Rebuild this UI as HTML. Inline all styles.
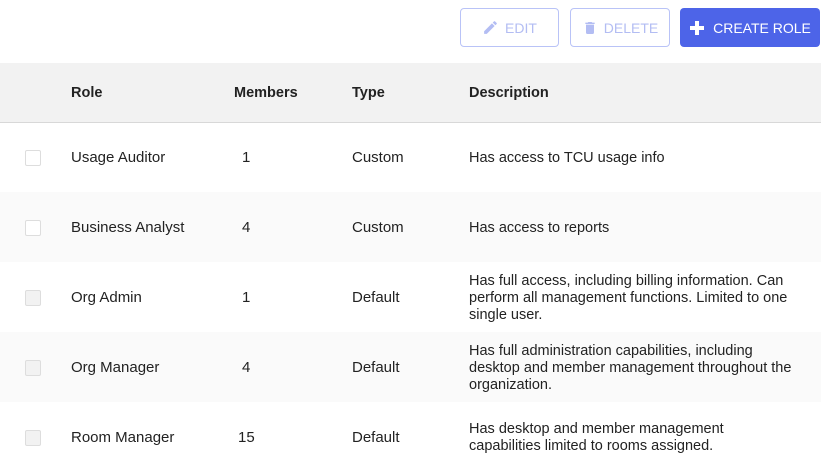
<!DOCTYPE html>
<html><head><style>
body{margin:0;width:821px;height:470px;overflow:hidden;background:#fff;font-family:"Liberation Sans",sans-serif;color:#222;font-size:15px}
.btn{position:absolute;top:8px;height:39px;border-radius:4px;box-sizing:border-box;display:flex;align-items:center;justify-content:center;font-size:14px;letter-spacing:0}
.out{border:1px solid #b9c3f7;color:#b3bdf3;background:#fff}
.fill{background:#4d64e8;color:#fff}
.hdr{position:absolute;left:0;top:63px;width:821px;height:59px;background:#f2f2f2;border-bottom:1px solid #d8d8d8}
.hdr span{position:absolute;top:22px;font-weight:bold;font-size:14.5px}
.row{position:absolute;left:0;width:821px;height:70px}
.row span{position:absolute}
.cb{position:absolute;left:25px;width:14px;height:14px;border:1px solid #ddd;border-radius:2px;top:28px;background:#fff}
.cell{top:27px}
.desc{left:469px;top:1px;height:70px;display:flex;align-items:center;line-height:17px;width:352px;font-size:14.5px}
</style></head><body>
<div class="btn out" style="left:460px;width:99px"><svg width="17" height="17" viewBox="0 0 24 24" style="margin-right:6px"><path fill="#b3bdf3" d="M3 17.25V21h3.75L17.81 9.94l-3.75-3.75L3 17.25zM20.71 7.04a1 1 0 000-1.41l-2.34-2.34a1 1 0 00-1.41 0l-1.83 1.83 3.75 3.75 1.83-1.83z"/></svg>EDIT</div>
<div class="btn out" style="left:570px;width:100px"><svg width="16" height="18" viewBox="0 0 24 24" style="margin-right:6px"><path fill="#b3bdf3" d="M6 19c0 1.1.9 2 2 2h8c1.1 0 2-.9 2-2V7H6v12zM19 4h-3.5l-1-1h-5l-1 1H5v2h14V4z"/></svg>DELETE</div>
<div class="btn fill" style="left:680px;width:140px"><svg width="16" height="16" viewBox="0 0 16 16" style="margin-right:8px"><path fill="#fff" d="M6 1h4v5h5v4h-5v5H6v-5H1V6h5z"/></svg>CREATE ROLE</div>
<div class="hdr"><span style="left:71px">Role</span><span style="left:234px">Members</span><span style="left:352px">Type</span><span style="left:469px">Description</span></div>
<div class="row" style="top:122px"><div class="cb"></div><span class="cell" style="left:71px">Usage Auditor</span><span class="cell" style="left:242px">1</span><span class="cell" style="left:352px">Custom</span><span class="desc">Has access to TCU usage info</span></div>
<div class="row" style="top:192px;background:#fafafa"><div class="cb"></div><span class="cell" style="left:71px">Business Analyst</span><span class="cell" style="left:242px">4</span><span class="cell" style="left:352px">Custom</span><span class="desc">Has access to reports</span></div>
<div class="row" style="top:262px"><div class="cb" style="background:#f2f2f2"></div><span class="cell" style="left:71px">Org Admin</span><span class="cell" style="left:242px">1</span><span class="cell" style="left:352px">Default</span><span class="desc">Has full access, including billing information. Can<br>perform all management functions. Limited to one<br>single user.</span></div>
<div class="row" style="top:332px;background:#fafafa"><div class="cb" style="background:#f2f2f2"></div><span class="cell" style="left:71px">Org Manager</span><span class="cell" style="left:242px">4</span><span class="cell" style="left:352px">Default</span><span class="desc">Has full administration capabilities, including<br>desktop and member management throughout the<br>organization.</span></div>
<div class="row" style="top:402px"><div class="cb" style="background:#f2f2f2"></div><span class="cell" style="left:71px">Room Manager</span><span class="cell" style="left:238px">15</span><span class="cell" style="left:352px">Default</span><span class="desc">Has desktop and member management<br>capabilities limited to rooms assigned.</span></div>
</body></html>
